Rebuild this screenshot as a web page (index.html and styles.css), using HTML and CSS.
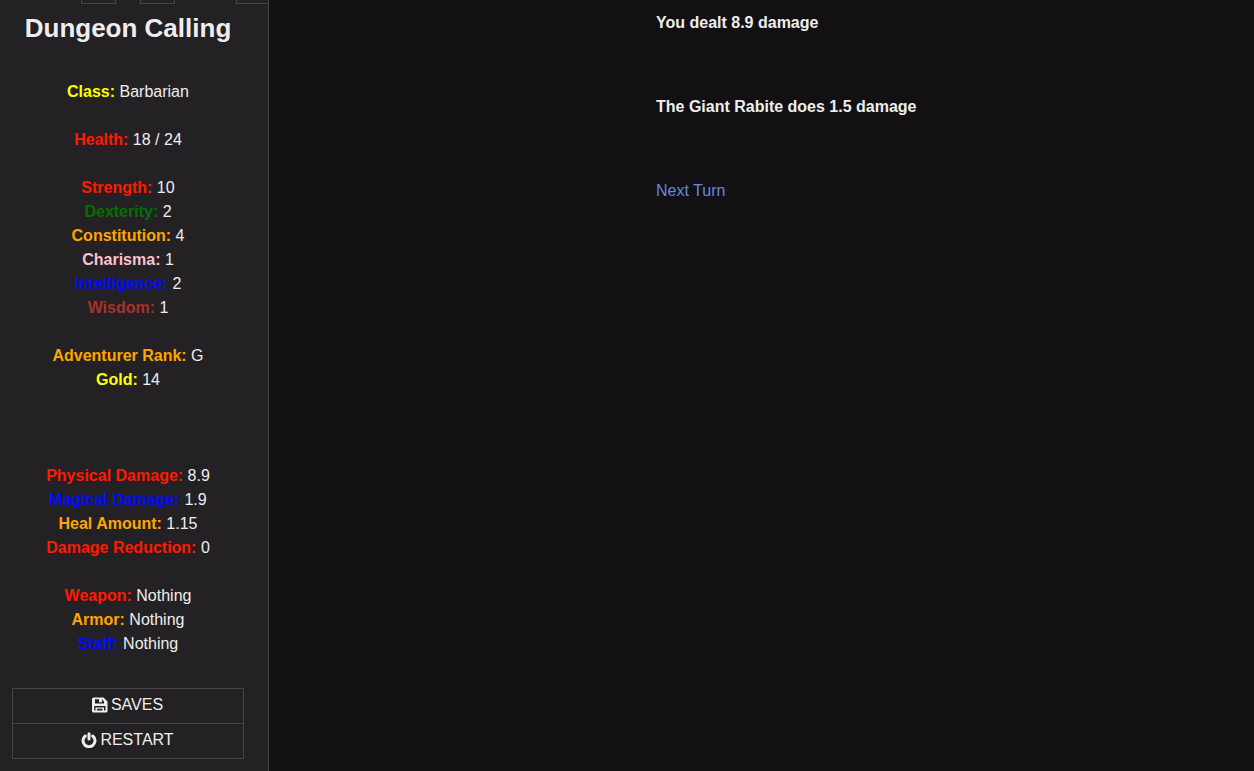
FILE: index.html
```html
<!DOCTYPE html>
<html lang="en">
<head>
  <meta charset="UTF-8" />
  <meta name="viewport" content="width=device-width, initial-scale=1.0"/>
  <title>Dungeon Calling</title>
  <link rel="stylesheet" href="styles.css">
</head>
<body>

<aside class="ui-bar">
  <!-- Tray is tucked under the top edge, only the button bottoms show -->
  <div class="tray">
    <button type="button" aria-label="Go back"></button>
    <button type="button" aria-label="Go forward"></button>
    <button type="button" class="toggle" aria-label="Toggle the UI bar"></button>
  </div>

  <h1>Dungeon Calling</h1>

  <div class="caption">
    <p><b class="yellow">Class:</b> Barbarian</p>
    <p><b class="red">Health:</b> 18 / 24</p>
    <p>
      <b class="red">Strength:</b> 10<br>
      <b class="green">Dexterity:</b> 2<br>
      <b class="orange">Constitution:</b> 4<br>
      <b class="pink">Charisma:</b> 1<br>
      <b class="blue">Intelligence:</b> 2<br>
      <b class="brown">Wisdom:</b> 1
    </p>
    <p>
      <b class="orange">Adventurer Rank:</b> G<br>
      <b class="yellow">Gold:</b> 14
    </p>
    <p class="combat">
      <b class="red">Physical Damage:</b> 8.9<br>
      <b class="blue">Magical Damage:</b> 1.9<br>
      <b class="orange">Heal Amount:</b> 1.15<br>
      <b class="red">Damage Reduction:</b> 0
    </p>
    <p>
      <b class="red">Weapon:</b> Nothing<br>
      <b class="orange">Armor:</b> Nothing<br>
      <b class="blue">Staff:</b> Nothing
    </p>
  </div>

  <nav class="menu">
    <button type="button">
      <svg viewBox="0 0 16 16" aria-hidden="true">
        <path fill-rule="evenodd" d="M1.500 0.500H11.500L15.500 4.500V14A1.500 1.500 0 0 1 14 15.500H1.500A1.500 1.500 0 0 1 0 14V2A1.500 1.500 0 0 1 1.500 0.500ZM3 2.200V6.500H12V4.500L10 2.200V5.200H7V2.200ZM2.200 9V13.500H3.500V10.500H12V13.500H13.500V9ZM5 11.800V13.500H10.500V11.800Z"/>
      </svg>
      SAVES
    </button>
    <button type="button">
      <svg viewBox="0 0 16 16" aria-hidden="true">
        <path class="ring" d="M4.300 4A6 6 0 1 0 11.700 4"/>
        <path class="ring" d="M8 1.700V7"/>
      </svg>
      RESTART
    </button>
  </nav>
</aside>

<main class="story">
  <p><b>You dealt 8.9 damage</b></p>
  <p><b>The Giant Rabite does 1.5 damage</b></p>
  <p><a href="#">Next Turn</a></p>
</main>

</body>
</html>
```
FILE: styles.css
```css
* {
  box-sizing: border-box;
}

body {
  display: flex;
  min-height: 100vh;
  margin: 0;
  background: #121013;
  color: #eee;
  font: 16px/24px "Liberation Sans", Arial, sans-serif;
}

p {
  margin: 0;
}

/* Sidebar */
.ui-bar {
  display: flex;
  flex-direction: column;
  flex: 0 0 269px;
  padding: 0 24px 12px 12px;
  background: #242124;
  border-right: 1px solid #444;
  text-align: center;
}

.tray {
  display: flex;
  align-items: flex-end;
  gap: 24px;
  height: 4px;
  margin-right: -24px;
  padding-left: 69px;
  overflow: hidden;
}

.tray button {
  flex: 0 0 35px;
  height: 36px;
  padding: 0;
  background: transparent;
  border: 1px solid #444;
}

.tray .toggle {
  flex-basis: 32px;
  margin-left: auto;
  border-right: 0;
}

h1 {
  margin: 8px 0 36px;
  font-size: 26px;
  line-height: 32px;
}

.caption p + p {
  margin-top: 24px;
}

.caption p.combat {
  margin-top: 72px;
}

.yellow { color: #ff0; }
.red { color: #ff1a00; }
.green { color: #007000; }
.orange { color: #ffa500; }
.pink { color: #ffc0cb; }
.blue { color: #000cff; }
.brown { color: #a93226; }

.menu {
  margin-top: auto;
  border: 1px solid #444;
}

.menu button {
  display: flex;
  align-items: center;
  justify-content: center;
  gap: 3px;
  width: 100%;
  height: 34px;
  padding: 0 1px 2px 0;
  background: transparent;
  border: 0;
  color: #eee;
  font: inherit;
  cursor: pointer;
}

.menu button + button {
  height: 35px;
  border-top: 1px solid #444;
}

.menu svg {
  width: 16px;
  height: 16px;
  fill: #eee;
}

.menu .ring {
  fill: none;
  stroke: #eee;
  stroke-width: 3;
  stroke-linecap: round;
}

/* Story passage */
.story {
  flex: 1;
  padding: 9px 24px 9px 387px;
  line-height: 28px;
}

.story p + p {
  margin-top: 56px;
}

.story a {
  color: #68d;
  text-decoration: none;
}
```
